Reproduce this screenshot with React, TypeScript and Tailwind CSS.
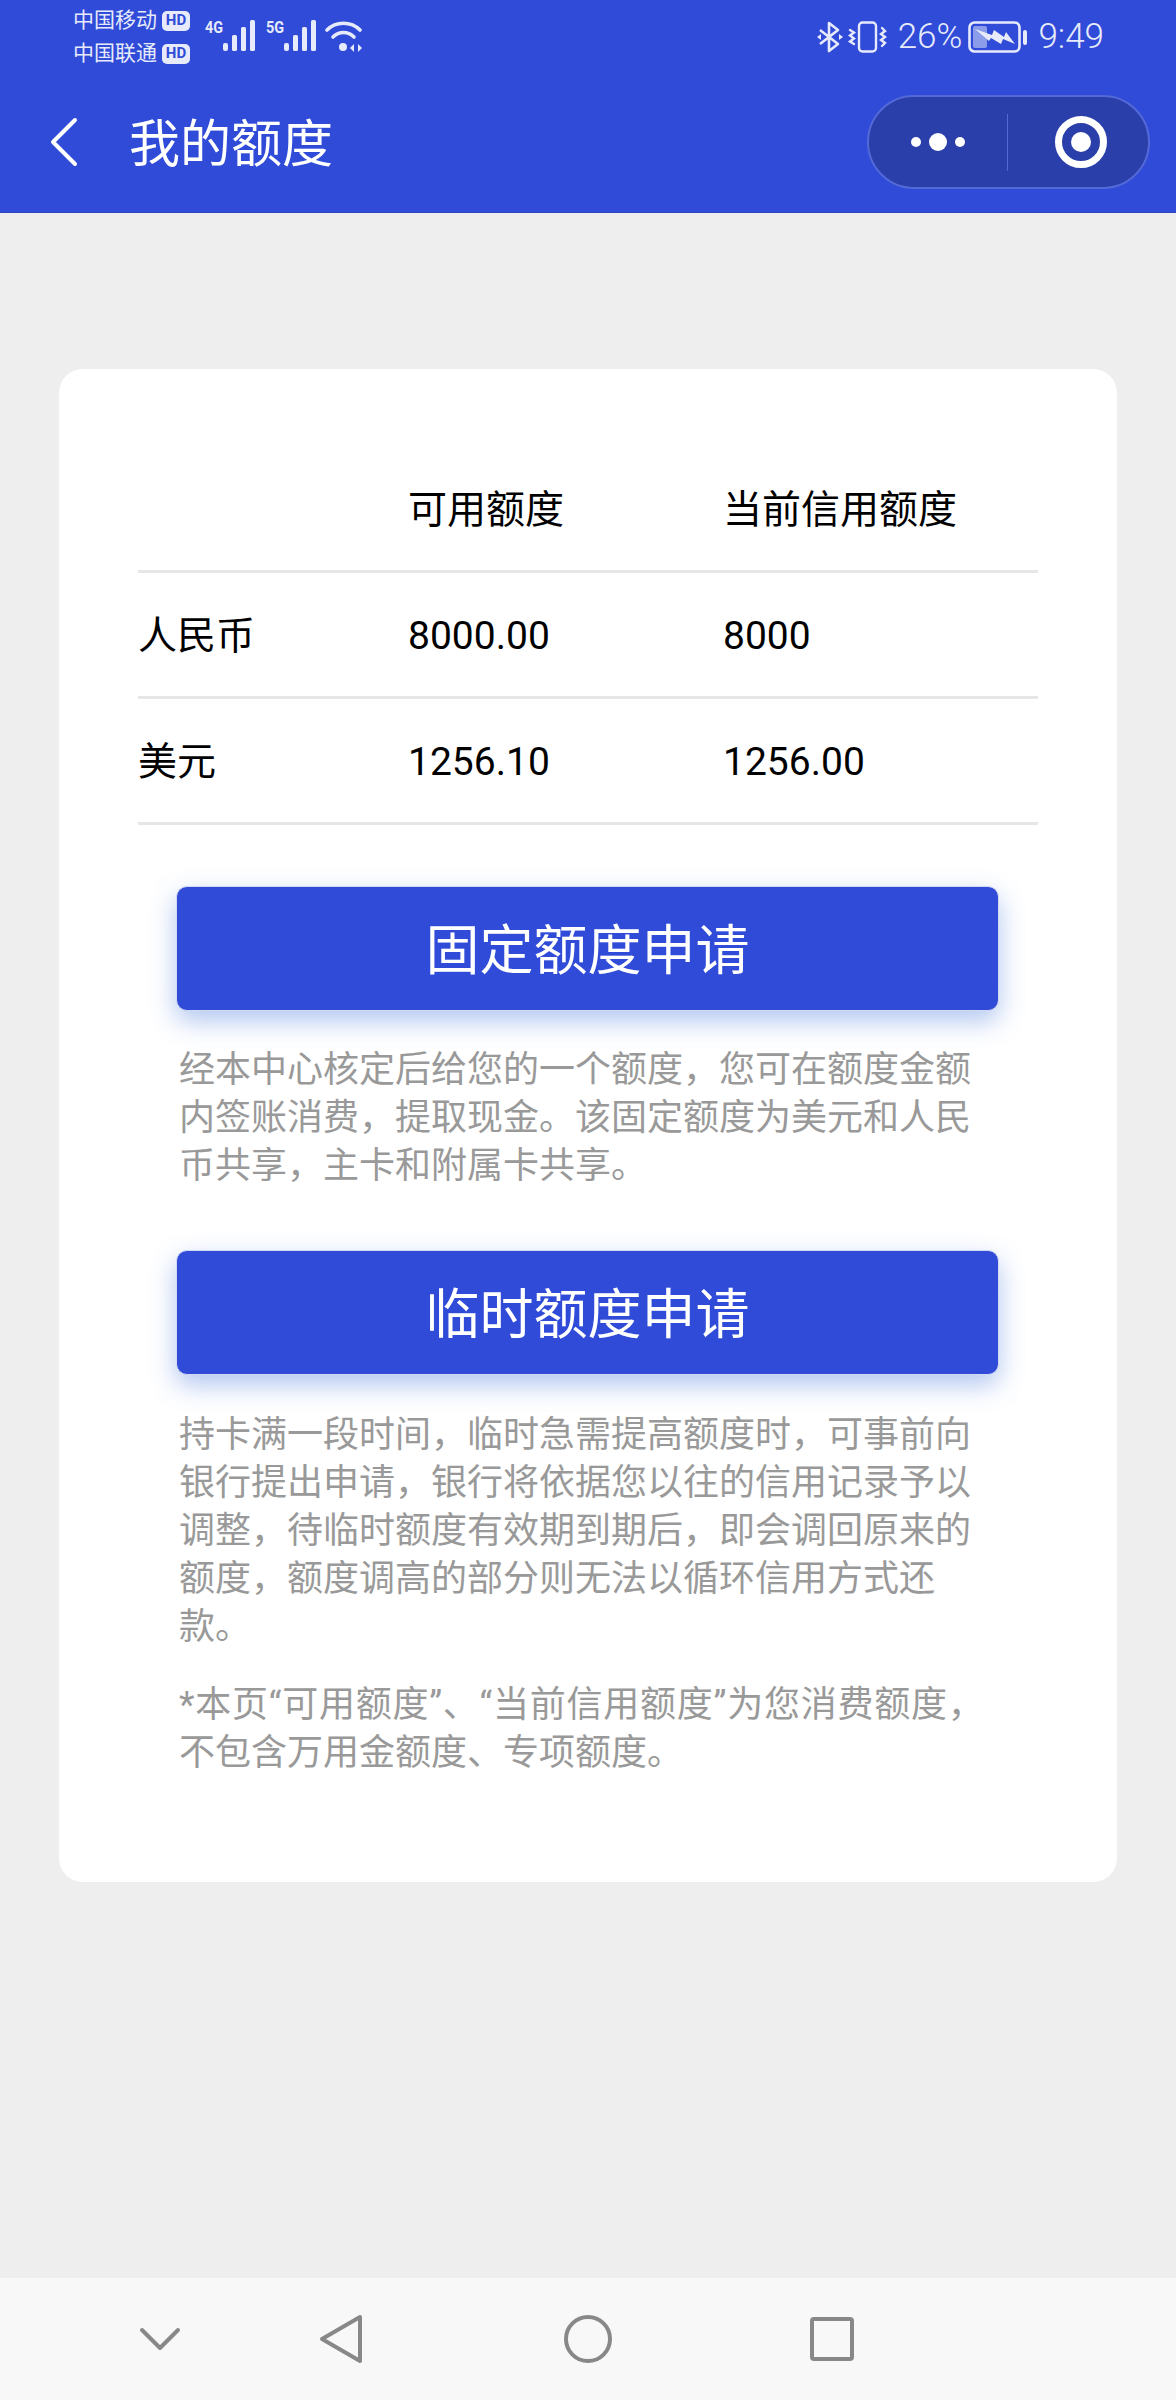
const cjk = 'font-["Roboto","Noto_Sans_CJK_SC",sans-serif]';

function HdBadge() {
  return (
    <span className="ml-[5px] flex h-[20px] w-[28px] items-center justify-center rounded-[5px] bg-[#e6eafb] text-[15px] leading-none font-bold text-[#2f4bd8]">
      HD
    </span>
  );
}

function Signal({ label }: { label: string }) {
  return (
    <div className="relative h-[32px] w-[50px]">
      <span className="absolute top-[-1px] left-[-1px] scale-x-90 text-[16px] leading-[18px] font-bold text-[#e6eafb]">{label}</span>
      <svg className="absolute top-0 left-[17px]" width="33" height="32" viewBox="0 0 33 32" fill="#e6eafb">
        <rect x="1" y="23" width="5" height="8" rx="2" />
        <rect x="10" y="15" width="5" height="16" rx="1.5" />
        <rect x="19" y="7" width="5" height="24" rx="1.5" />
        <rect x="28" y="0" width="5" height="31" rx="1.5" />
      </svg>
    </div>
  );
}

function Wifi() {
  return (
    <svg width="38" height="34" viewBox="0 0 38 34" fill="none" stroke="#e6eafb" strokeLinecap="round">
      <path d="M2 10 C11 1 26 1 35 10" strokeWidth="3.6" />
      <path d="M8 17 C14 11 23 11 29 17" strokeWidth="3.6" />
      <circle cx="18" cy="27" r="4" fill="#e6eafb" stroke="none" />
      <path d="M29 24 L29 32 L25 28 Z" fill="#e6eafb" stroke="none" />
      <path d="M33 24 L33 32 L37 28 Z" fill="#e6eafb" stroke="none" />
    </svg>
  );
}

function Bluetooth() {
  return (
    <svg width="26" height="32" viewBox="0 0 26 32" fill="none" stroke="#e6eafb" strokeWidth="2.6" strokeLinejoin="round">
      <path d="M3 9 L21 23 L12 30 L12 2 L21 9 L3 23" />
      <path d="M0 16 L4 13 L4 19 Z" fill="#e6eafb" stroke="none" />
      <path d="M26 16 L22 13 L22 19 Z" fill="#e6eafb" stroke="none" />
    </svg>
  );
}

function Vibrate() {
  return (
    <svg width="40" height="32" viewBox="0 0 40 32" fill="none" stroke="#e6eafb" strokeWidth="2.4" strokeLinecap="round">
      <rect x="11" y="1.5" width="17" height="29" rx="3.5" />
      <path d="M2 9 L6 11.5 L2 14.5 L6 17.5 L2 20.5 L6 23" />
      <path d="M34 7 L37 10 L33 13 L37 16 L33 19 L37 22 L34 25" />
    </svg>
  );
}

function Battery() {
  return (
    <svg width="60" height="32" viewBox="0 0 60 32" fill="none">
      <rect x="1.5" y="1.5" width="50" height="29" rx="5" stroke="#e6eafb" strokeWidth="2.6" />
      <rect x="5" y="5" width="14" height="22" rx="2" fill="#8c9bea" />
      <path d="M7 8 L24 14 L26 9 L36 16 L38 11 L47 23 L35 18 L33 23 L23 17 L21 20 Z" fill="#e6eafb" />
      <rect x="55" y="9" width="4" height="15" rx="2" fill="#e6eafb" />
    </svg>
  );
}

function Header() {
  return (
    <div className="h-[213px] shrink-0 border-b-[1px] border-[#2b44c4] bg-[#2f4bd8] text-white">
      <div className="flex h-[95px] items-start justify-between pt-[9px] pr-[72px] pl-[73px]">
        <div className="flex items-start">
          <div className="mt-[-5px] w-[120px] text-[21px] leading-[33px] text-[#e6eafb]">
            <div className="flex items-center">中国移动<HdBadge /></div>
            <div className="flex items-center">中国联通<HdBadge /></div>
          </div>
          <div className="mt-[11px] ml-[12px] flex gap-[11px]">
            <Signal label="4G" />
            <Signal label="5G" />
            <div className="ml-[-2px]"><Wifi /></div>
          </div>
        </div>
        <div className="mt-[12px] flex items-center text-[35px] leading-[32px] font-light text-[#e6eafb]">
          <Bluetooth />
          <div className="ml-[5px]"><Vibrate /></div>
          <span className="ml-[10px]">26%</span>
          <div className="ml-[6px]"><Battery /></div>
          <span className="ml-[10px]">9:49</span>
        </div>
      </div>
      <div className="flex items-center justify-between pr-[26px] pl-[50px]">
        <div className="flex items-center">
          <svg width="28" height="50" viewBox="0 0 28 50" fill="none" stroke="white" strokeWidth="4" strokeLinecap="round" strokeLinejoin="round">
            <path d="M25 3 L3 25 L25 47" />
          </svg>
          <h1 className="ml-[51px] pt-[5px] text-[51px] leading-[70px]">我的额度</h1>
        </div>
        <div className="flex h-[94px] w-[283px] items-center rounded-full border-2 border-[#5469d8] bg-[#2a3fa9]">
          <div className="flex flex-1 items-center justify-center gap-[8px]">
            <span className="h-[10px] w-[10px] rounded-full bg-white" />
            <span className="h-[18px] w-[18px] rounded-full bg-white" />
            <span className="h-[10px] w-[10px] rounded-full bg-white" />
          </div>
          <div className="h-[57px] w-[1px] bg-[#5469d8]" />
          <div className="flex w-[140px] items-center justify-center pl-[6px]">
            <div className="flex h-[52px] w-[52px] items-center justify-center rounded-full border-[7px] border-white">
              <span className="h-[20px] w-[20px] rounded-full bg-white" />
            </div>
          </div>
        </div>
      </div>
    </div>
  );
}

const rows = [
  { name: '人民币', available: '8000.00', credit: '8000' },
  { name: '美元', available: '1256.10', credit: '1256.00' },
];

function LimitTable() {
  return (
    <div className="mx-[79px] mt-[77px] text-[39px] text-black">
      <div className="grid h-[126px] grid-cols-[270px_315px_1fr] items-center border-b-[3px] border-[#e6e6e6] pt-[3px]">
        <div />
        <div>可用额度</div>
        <div>当前信用额度</div>
      </div>
      {rows.map((row) => (
        <div key={row.name} className="grid h-[126px] grid-cols-[270px_315px_1fr] items-center border-b-[3px] border-[#e6e6e6] pt-[3px]">
          <div>{row.name}</div>
          <div>{row.available}</div>
          <div>{row.credit}</div>
        </div>
      ))}
    </div>
  );
}

function ApplyButton({ label }: { label: string }) {
  return (
    <button className="mx-[117px] block h-[125px] w-[823px] rounded-[11px] border border-[#d3d8f3] bg-[#2f4bd8] pt-[6px] text-[54px] text-white shadow-[0_10px_26px_rgba(70,120,220,0.42)]">
      {label}
    </button>
  );
}

function Desc({ className, children }: { className: string; children: React.ReactNode }) {
  return <p className={`mx-[120px] text-[36px] leading-[48px] text-[#999999] ${className}`}>{children}</p>;
}

function Nav() {
  return (
    <div className="flex h-[122px] shrink-0 items-center bg-[#f8f8f8] pl-[139px]">
      <svg width="42" height="24" viewBox="0 0 42 24" fill="none" stroke="#888888" strokeWidth="4" strokeLinecap="round" strokeLinejoin="round">
        <path d="M3 3 L21 21 L39 3" />
      </svg>
      <svg className="ml-[138px]" width="44" height="50" viewBox="0 0 44 50" fill="none" stroke="#888888" strokeWidth="4" strokeLinejoin="round">
        <path d="M41 3 L41 47 L3 25 Z" />
      </svg>
      <svg className="ml-[200px]" width="50" height="50" viewBox="0 0 50 50" fill="none" stroke="#888888" strokeWidth="4">
        <circle cx="25" cy="25" r="22" />
      </svg>
      <svg className="ml-[196px]" width="46" height="46" viewBox="0 0 46 46" fill="none" stroke="#888888" strokeWidth="4" strokeLinejoin="round">
        <rect x="3" y="3" width="40" height="40" rx="2" />
      </svg>
    </div>
  );
}

export default function App() {
  return (
    <div className={`flex h-[2400px] w-[1176px] flex-col bg-[#eeeeee] ${cjk}`}>
      <Header />
      <main className="flex-1">
        <div className="mx-[59px] mt-[156px] h-[1513px] overflow-hidden rounded-[24px] bg-white pt-px">
          <LimitTable />
          <div className="mt-[61px]"><ApplyButton label="固定额度申请" /></div>
          <Desc className="mt-[35px]">
            经本中心核定后给您的一个额度，您可在额度金额内签账消费，提取现金。该固定额度为美元和人民币共享，主卡和附属卡共享。
          </Desc>
          <div className="mt-[60px]"><ApplyButton label="临时额度申请" /></div>
          <Desc className="mt-[36px]">
            持卡满一段时间，临时急需提高额度时，可事前向银行提出申请，银行将依据您以往的信用记录予以调整，待临时额度有效期到期后，即会调回原来的额度，额度调高的部分则无法以循环信用方式还款。
          </Desc>
          <Desc className="mt-[30px] tracking-[0.75px]">
            *本页“可用额度”、“当前信用额度”为您消费额度，
          </Desc>
          <Desc className="">不包含万用金额度、专项额度。</Desc>
        </div>
      </main>
      <Nav />
    </div>
  );
}
